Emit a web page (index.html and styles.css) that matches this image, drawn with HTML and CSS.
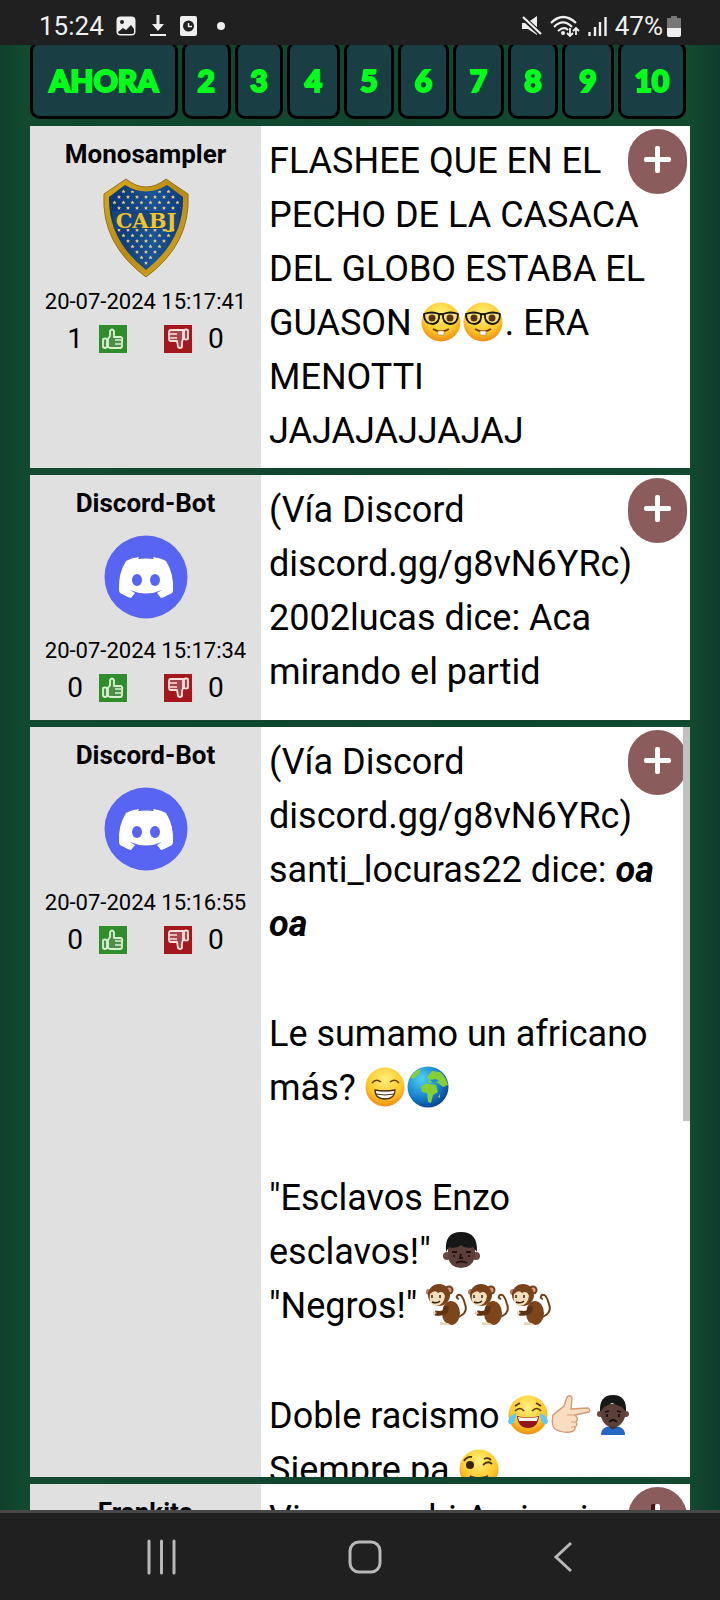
FILE: index.html
```html
<!DOCTYPE html>
<html lang="es">
<head>
<meta charset="utf-8">
<meta name="viewport" content="width=device-width, initial-scale=1">
<title>Comentarios</title>
<link rel="stylesheet" href="styles.css">
</head>
<body>
<svg class="defs" aria-hidden="true">
  <defs>
    <radialGradient id="face" cx=".5" cy=".3" r=".7"><stop offset="0" stop-color="#fff07a"/><stop offset=".65" stop-color="#fdc92c"/><stop offset="1" stop-color="#ee8d12"/></radialGradient>
    <radialGradient id="sea" cx=".35" cy=".3" r=".75"><stop offset="0" stop-color="#4fd0f5"/><stop offset=".6" stop-color="#1785cf"/><stop offset="1" stop-color="#0a3f92"/></radialGradient>
    <linearGradient id="gold" x1="0" x2="1" y2="1"><stop offset="0" stop-color="#d9aa1c"/><stop offset=".5" stop-color="#b98a12"/><stop offset="1" stop-color="#d9ab20"/></linearGradient>
    <linearGradient id="blue" x2="1"><stop offset="0" stop-color="#0b3470"/><stop offset=".6" stop-color="#1c5496"/><stop offset="1" stop-color="#0d3b7c"/></linearGradient>
    <pattern id="stars" width="9" height="11" patternUnits="userSpaceOnUse"><path d="M2.500.5l.6 1.300 1.400.1-1 .9.300 1.400-1.300-.7-1.300.7.3-1.400-1-.9 1.400-.1zM7 6l.6 1.300 1.400.1-1 .9.300 1.400-1.300-.7-1.300.7.3-1.400-1-.9 1.400-.1z" fill="#e3d27e"/></pattern>
    <symbol id="nerd" viewBox="0 0 42 42"><circle cx="20" cy="21" r="19.500" fill="url(#face)"/><g fill="#fbe27a" stroke="#151515" stroke-width="1.800"><path d="M3 13q8-3 15 0 1 9-6 10-9 0-9-10zM22 13q8-3 15 0 0 10-8 10-8-1-7-10z"/></g><g fill="#5b340c"><circle cx="11" cy="17" r="3.500"/><circle cx="29" cy="17" r="3.500"/></g><path d="M18 14q2-2 4 0" fill="none" stroke="#151515" stroke-width="2"/><path d="M12 28q8 5 16 0" fill="none" stroke="#6b3a08" stroke-width="2"/><path d="M17 30h6v4h-6z" fill="#fff" stroke="#a98b60" stroke-width=".6"/></symbol>
    <symbol id="grin" viewBox="0 0 42 42"><circle cx="20" cy="21" r="19.500" fill="url(#face)"/><path d="M7 17q4-5 9-1M25 16q5-4 9 1" fill="none" stroke="#6b430c" stroke-width="1.600"/><path d="M10 24q10 2 20 0 0 9-10 9t-10-9z" fill="#fff" stroke="#4b2c0b" stroke-width="1.300"/><path d="M11 28q9 2 18 0" fill="none" stroke="#4b2c0b"/></symbol>
    <symbol id="globe" viewBox="0 0 42 42"><circle cx="21" cy="21" r="20.500" fill="url(#sea)"/><g fill="#86cf36"><path d="M14 21q4-5 9-3l6 1 2 7-5 3-2 8-3-1-1-9-5-1zM20 11l5-6 8 1q6 5 8 13l-5 2-5-4-3-1-7 1 1-3zM3 11l6-6 5-2-2 5-6 5zM31 31l2-3 0 4z"/></g><path d="M23 14l6-1 3 2-6 2z" fill="#1b8fd6"/></symbol>
    <symbol id="man" viewBox="0 0 42 42"><circle cx="7" cy="26" r="4" fill="#694842"/><circle cx="36" cy="26" r="4" fill="#694842"/><path d="M8 14h27v13q-3 11-14 11T8 27z" fill="#5c3f39"/><path d="M6 22Q4 2 21 2t16 20l-4-5-3 1-6-1-3-2-3 2-6 1-3-1z" fill="#171717"/><path d="M12 22h5M26 22h5M14 25v2M29 25v2M21 24l-1 4h3M16 33q5-3 11 0" fill="none" stroke="#1c1110" stroke-width="1.800"/></symbol>
    <symbol id="monkey" viewBox="0 0 42 42"><path d="M28 34q15-3 11-14-3-11-7-9-3 3 1 4" fill="none" stroke="#6d3d17" stroke-width="2"/><ellipse cx="25" cy="29" rx="9" ry="12" fill="#7d451b"/><circle cx="23" cy="6" r="4.500" fill="#74401a"/><circle cx="3" cy="8" r="3" fill="#b67460"/><circle cx="23" cy="6" r="2.500" fill="#dc9a88"/><circle cx="13" cy="11" r="11" fill="#79441c"/><path d="M4 10q5-5 8-1 5-3 7 3-1 9-9 10-8-1-6-12z" fill="#f2dfbd"/><path d="M6 11v3M14 11v3M6 18q5 2 8-1" fill="none" stroke="#3b2012" stroke-width="1.500"/><path d="M20 22q2 9-11 7" fill="none" stroke="#5e3210" stroke-width="5"/><path d="M11 29l-4-2v4z" fill="#ead5b8"/><path d="M14 38l8 1 3 2H14z" fill="#ead5b8"/></symbol>
    <symbol id="joy" viewBox="0 0 42 42"><circle cx="20" cy="21" r="19.500" fill="url(#face)"/><path d="M7 17q5-5 9 0M24 17q5-5 9 0M7 12l5-3M28 9l5 3" fill="none" stroke="#5b350c" stroke-width="1.700"/><path d="M9 22q11 3 22 0-1 12-11 12T9 22z" fill="#8d1818"/><path d="M10 23q10 2 20 0l-1 4H11z" fill="#fff"/><path d="M0 28q0-6 8-9 0 9-4 11-3 1-4-2zM40 28q0-6-8-9 0 9 4 11 3 1 4-2z" fill="#62c8f0"/></symbol>
    <symbol id="point" viewBox="0 0 42 42"><path d="M14 12l3-9q3-3 5 1l-1 11 17-1q3 2 1 4l-14 3q4 4 1 7 2 3-1 5 1 4-5 5-9 1-15-3-4-3-2-14z" fill="#f9ddc3" stroke="#d39b74" stroke-width="1.400"/><path d="M25 21l-8 0M26 28h-5M25 33h-4" fill="none" stroke="#d7a27d"/></symbol>
    <symbol id="frown" viewBox="0 0 42 42"><path d="M9 41q0-9 12-9t12 9z" fill="#2566c7"/><path d="M17 27h8v6q-4 4-8 0z" fill="#46302c"/><circle cx="8" cy="20" r="3" fill="#694842"/><circle cx="34" cy="20" r="3" fill="#694842"/><path d="M9 10h24v13q-3 10-12 10T9 23z" fill="#5c3f39"/><path d="M8 18Q7 1 21 1t13 17l-4-5-10-4-8 4z" fill="#171717"/><path d="M13 18l4-1M25 17l4 1M15 20v3M27 20v3M17 28q4-4 8 0" fill="none" stroke="#180e0d" stroke-width="1.700"/></symbol>
    <symbol id="wink" viewBox="0 0 42 42"><circle cx="20" cy="21" r="19.500" fill="url(#face)"/><circle cx="11" cy="17" r="4" fill="#3b2309"/><path d="M5 13q3-5 8-4M24 17q5-5 9-1M25 11q4-2 7 1M11 28q8 4 18 0M11 28q7 8 18 0" fill="none" stroke="#4b2e0b" stroke-width="1.800"/></symbol>
    <symbol id="discord" viewBox="0 0 84 84"><circle cx="42" cy="42" r="41.500" fill="#5865f2"/><path d="M35 22l-1 2q8-1 16 0l-1-2q8 1 13 4 8 13 7 29 0 3-3 4-5 3-9 4l-4-5 5-3q-16 7-32 0l5 3-4 5q-4-1-9-4-3-1-3-4-1-16 7-29 5-3 13-4z" fill="#fff"/><ellipse cx="33" cy="45" rx="5" ry="6" fill="#5865f2"/><ellipse cx="51" cy="45" rx="5" ry="6" fill="#5865f2"/></symbol>
    <symbol id="crest" viewBox="0 0 86 100"><path d="M23 1q20 16 40 0l22 15q3 50-42 83Q-2 66 1 16z" fill="url(#gold)" stroke="#8f7224"/><path d="M22 7q21 13 42 0l16 12q1 43-37 73Q5 62 6 19z" fill="url(#blue)"/><path d="M22 9q21 13 42 0l14 11q1 41-35 69Q8 61 8 20z" fill="url(#stars)"/><path d="M9 33h68l-2 18H11z" fill="#17457f"/><text x="43" y="50" text-anchor="middle" class="crest-text">CABJ</text></symbol>
    <symbol id="up" viewBox="0 0 28 28"><path d="M0 0h28v28H0z" fill="#2f8d2c"/><path d="M4 14q2-1 4 0v8q-2 2-4 0zM9 14l2-3V6q2-3 4 0v6h7q2 1 1 3v6q0 2-2 2H11l-2-1z" fill="#4d8f4a" stroke="#d7f3ce" stroke-width="1.800" stroke-linejoin="round"/><path d="M16 15h6M16 19h6" stroke="#d7f3ce" stroke-width="1.500"/></symbol>
    <symbol id="down" viewBox="0 0 28 28"><path d="M0 0h28v28H0z" fill="#a5161d"/><path d="M20 5q2-1 4 0v9q-2 1-4 0zM19 14l-1 3v5q-2 2-4 0l-1-6H7q-2 0-2-2V7q0-2 2-2h12z" fill="#a1464d" stroke="#ffe1db" stroke-width="1.800" stroke-linejoin="round"/><path d="M6 9h7M6 13h7" stroke="#ffe1db" stroke-width="1.500"/></symbol>
  </defs>
</svg>

<header class="status">
  <span class="clock">15:24</span>
  <svg width="20" height="20" viewBox="0 0 20 20"><rect width="19" height="19" x=".5" y=".5" rx="4" fill="#efefef"/><circle cx="6" cy="6" r="2" fill="#202020"/><path d="M2 16l5-4 3 2 5-5 3 4v4q-1 1-2 1H4q-2 0-2-2z" fill="#202020"/></svg>
  <svg width="16" height="22" viewBox="0 0 16 22"><path d="M8 0v12" stroke="#efefef" stroke-width="3"/><path d="M2 9h12l-6 7zM0 19h16v2H0z" fill="#efefef"/></svg>
  <svg width="17" height="20" viewBox="0 0 17 20"><rect width="17" height="20" rx="2" fill="#efefef"/><circle cx="8.500" cy="10" r="5.500" fill="#202020"/><path d="M8.500 7v3.500H12" fill="none" stroke="#efefef" stroke-width="1.500"/></svg>
  <span class="dot"></span>
  <span class="status-right">
    <svg width="20" height="20" viewBox="0 0 20 20"><path d="M0 7h5l10-7v19l-9-6H0z" fill="#efefef"/><path d="M-1 0l22 20" stroke="#202020" stroke-width="5"/><path d="M1 1l18 17" stroke="#efefef" stroke-width="2.200"/></svg>
    <svg width="30" height="23" viewBox="0 0 30 23"><g fill="none" stroke="#efefef" stroke-width="2.200"><path d="M1 8q12-12 25 0M4 12q9-9 18 0M8 16q6-5 10-1"/><path d="M20 13v8M17 18l3 3 3-3M26 20v-7M23 16l3-3 3 3" stroke-width="1.800"/></g><circle cx="13" cy="18" r="2" fill="#efefef"/></svg>
    <svg width="19" height="20" viewBox="0 0 19 20"><path d="M1.500 16v4M7 11v9M12 6v14M17.500 1v19" stroke="#efefef" stroke-width="2.400"/></svg>
    <span class="battery-text">47%</span>
    <svg width="14" height="21" viewBox="0 0 14 21"><path d="M4 0h6v2h4v10H0V2h4z" fill="#777"/><path d="M0 12h14v7q0 2-2 2H2q-2 0-2-2z" fill="#efefef"/></svg>
  </span>
</header>

<main class="page">
  <nav class="tabs" aria-label="Páginas">
    <button>AHORA</button><button>2</button><button>3</button><button>4</button><button>5</button><button>6</button><button>7</button><button>8</button><button>9</button><button>10</button>
  </nav>

  <article class="post">
    <aside class="author">
      <h2>Monosampler</h2>
      <div class="avatar"><svg width="86" height="100" role="img" aria-label="Escudo"><use href="#crest"/></svg></div>
      <time>20-07-2024 15:17:41</time>
      <div class="votes"><span>1</span><button aria-label="Me gusta"><svg><use href="#up"/></svg></button><button aria-label="No me gusta"><svg><use href="#down"/></svg></button><span>0</span></div>
    </aside>
    <div class="message">
      <p>FLASHEE QUE EN EL<br>PECHO DE LA CASACA<br>DEL GLOBO ESTABA EL<br>GUASON <svg class="emoji"><use href="#nerd"/></svg><svg class="emoji"><use href="#nerd"/></svg>. ERA<br>MENOTTI<br>JAJAJAJJAJAJ</p>
    </div>
    <button class="more" aria-label="Más"></button>
  </article>

  <article class="post">
    <aside class="author">
      <h2>Discord-Bot</h2>
      <div class="avatar"><svg width="84" height="84" role="img" aria-label="Discord"><use href="#discord"/></svg></div>
      <time>20-07-2024 15:17:34</time>
      <div class="votes"><span>0</span><button aria-label="Me gusta"><svg><use href="#up"/></svg></button><button aria-label="No me gusta"><svg><use href="#down"/></svg></button><span>0</span></div>
    </aside>
    <div class="message">
      <p>(Vía Discord<br>discord.gg/g8vN6YRc)<br>2002lucas dice: Aca<br>mirando el partid</p>
    </div>
    <button class="more" aria-label="Más"></button>
  </article>

  <article class="post post-long">
    <aside class="author">
      <h2>Discord-Bot</h2>
      <div class="avatar"><svg width="84" height="84" role="img" aria-label="Discord"><use href="#discord"/></svg></div>
      <time>20-07-2024 15:16:55</time>
      <div class="votes"><span>0</span><button aria-label="Me gusta"><svg><use href="#up"/></svg></button><button aria-label="No me gusta"><svg><use href="#down"/></svg></button><span>0</span></div>
    </aside>
    <div class="message">
      <p>(Vía Discord<br>discord.gg/g8vN6YRc)<br>santi_locuras22 dice: <b><i>oa<br>oa</i></b></p>
      <p>Le sumamo un africano<br>más? <svg class="emoji"><use href="#grin"/></svg><svg class="emoji"><use href="#globe"/></svg></p>
      <p>"Esclavos Enzo<br>esclavos!" <svg class="emoji"><use href="#man"/></svg><br>"Negros!" <svg class="emoji"><use href="#monkey"/></svg><svg class="emoji"><use href="#monkey"/></svg><svg class="emoji"><use href="#monkey"/></svg></p>
      <p>Doble racismo <svg class="emoji"><use href="#joy"/></svg><svg class="emoji"><use href="#point"/></svg><svg class="emoji"><use href="#frown"/></svg><br>Siempre pa <svg class="emoji"><use href="#wink"/></svg></p>
    </div>
    <button class="more" aria-label="Más"></button>
    <span class="thumb"></span>
  </article>

  <article class="post">
    <aside class="author"><h2>Frankito</h2></aside>
    <div class="message"><p>Vi un machi Arcimai</p></div>
    <button class="more more-shadow" aria-label="Más"></button>
  </article>
</main>

<footer class="system-nav">
  <button aria-label="Recientes"><svg width="32" height="46" viewBox="0 0 32 46"><path d="M3 7v32M15.500 7v32M28 7v32" stroke="#b8b8b8" stroke-width="3" stroke-linecap="round"/></svg></button>
  <button aria-label="Inicio"><svg width="34" height="46" viewBox="0 0 34 46"><rect x="2" y="8" width="30" height="30" rx="9" fill="none" stroke="#b8b8b8" stroke-width="3"/></svg></button>
  <button aria-label="Atrás"><svg width="24" height="46" viewBox="0 0 24 46"><path d="M19 9L4 23l15 14" fill="none" stroke="#b8b8b8" stroke-width="3"/></svg></button>
</footer>
</body>
</html>
```
FILE: styles.css
```css
* { box-sizing: border-box; }
body {
  margin: 0;
  height: 100vh;
  display: flex;
  flex-direction: column;
  background: #11452f;
  color: #000;
  font-family: Roboto, sans-serif;
}
button { border: 0; padding: 0; background: none; font: inherit; }
.defs { position: absolute; width: 0; height: 0; }

.status {
  flex: none;
  height: 45px;
  display: flex;
  align-items: center;
  padding: 7px 39px 0 39px;
  background: #202020;
  color: #efefef;
  font-size: 26px;
}
.status svg { flex: none; }
.clock { margin-right: 12px; }
.clock + svg { margin-right: 14px; }
.status > svg + svg { margin-right: 14px; }
.dot { width: 8px; height: 8px; margin-left: 6px; border-radius: 50%; background: #efefef; }
.status-right { margin-left: auto; display: flex; align-items: center; gap: 8px; }
.battery-text { margin-right: -4px; }

.page {
  flex: 1;
  min-height: 0;
  overflow: hidden;
  display: flex;
  flex-direction: column;
  gap: 7px;
  padding: 0 30px;
  background: linear-gradient(90deg, #0f3f2d, #12492f 3%, #11452f 50%, #12492f 96%, #0e3c2d);
}
.tabs {
  flex: none;
  display: grid;
  grid-template-columns: 149fr 50fr 48fr 54fr 50fr 52fr 51fr 51fr 52fr 69fr;
  gap: 4px;
  height: 78px;
  margin: -4px 4px 0 0;
}
.tabs button {
  border: 3px solid #000;
  border-radius: 10px;
  background: #193f44;
  color: #00ff19;
  font-family: Lato, sans-serif;
  font-size: 30px;
  font-weight: 900;
  -webkit-text-stroke: 2px #00ff19;
}

.post { position: relative; flex: none; display: flex; background: #fff; overflow: hidden; }
.post-long { height: 750px; }
.author {
  flex: 0 0 35%;
  display: flex;
  flex-direction: column;
  align-items: center;
  padding: 12px 0;
  background: #e0e0e0;
}
.author h2 { margin: 0; font-size: 26px; line-height: 32px; font-weight: 700; }
.avatar { height: 100px; margin: 8px 0; display: flex; align-items: center; }
.author time { font-size: 22px; line-height: 32px; }
.votes { display: flex; align-items: center; gap: 16px; height: 41px; font-size: 28px; }
.votes button { width: 28px; height: 28px; }
.votes button + button { margin-left: 21px; }
.votes svg { display: block; width: 28px; height: 28px; }
.crest-text { font: 900 21px "DejaVu Serif", serif; fill: #f2c424; }

.message { flex: 1; padding: 8px 8px 10px; font-size: 36px; line-height: 54px; white-space: nowrap; }
.message p { margin: 0; }
.message p + p { margin-top: 56px; }
.emoji { width: 42px; height: 42px; vertical-align: -8px; }

.more {
  position: absolute;
  top: 3px;
  right: 3px;
  width: 59px;
  height: 65px;
  border-radius: 30px;
  background: #8a5c5b;
}
.more::before, .more::after {
  content: "";
  position: absolute;
  left: 16px;
  top: 28px;
  width: 27px;
  height: 5px;
  border-radius: 2px;
  background: #fff;
}
.more::after { transform: rotate(90deg); }
.more-shadow::after { box-shadow: 0 4px #4a1010; }
.thumb { position: absolute; top: 0; right: 0; width: 7px; height: 394px; background: #c1c1c1; }

.system-nav {
  flex: none;
  height: 90px;
  display: flex;
  align-items: center;
  justify-content: space-between;
  padding: 0 144px 0 146px;
  border-top: 3px solid #484848;
  background: #202020;
}
.system-nav svg { display: block; }
```
